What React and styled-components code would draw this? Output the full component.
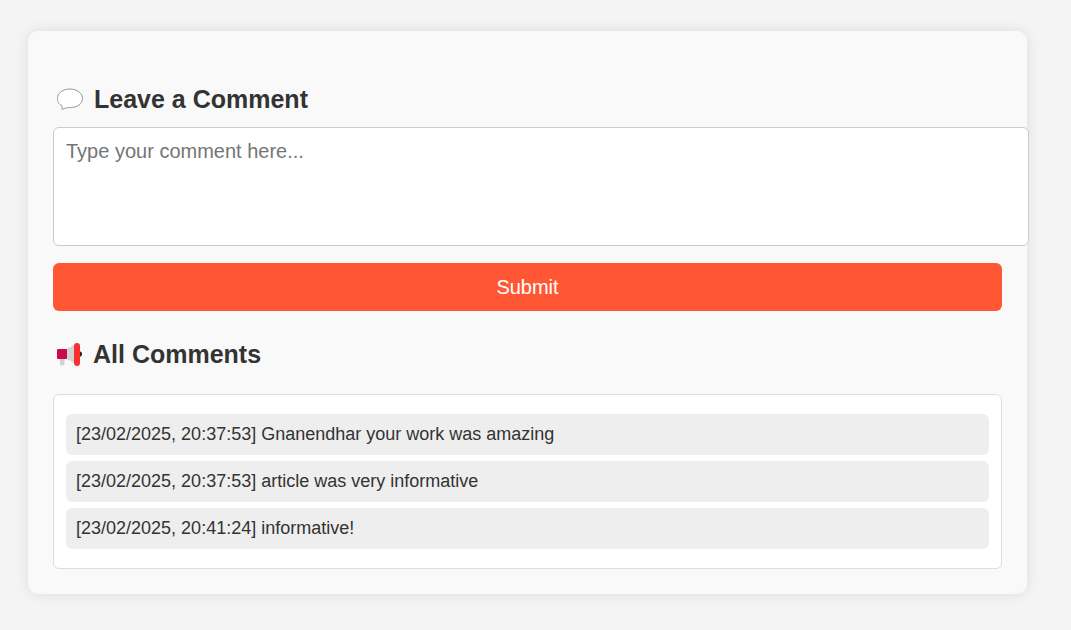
import React, { useState } from "react";
import styled, { createGlobalStyle } from "styled-components";

const GlobalStyle = createGlobalStyle`
  * { box-sizing: border-box; }
  body {
    margin: 0;
    background: #f4f4f4;
    color: #333;
    font-family: "Liberation Sans", Arial, sans-serif;
  }
`;

const Page = styled.main`
  padding: 31px 44px 36px 28px;
`;

const Card = styled.section`
  padding: 49px 25px 25px;
  background: #f9f9f9;
  border-radius: 10px;
  box-shadow: 0 0 13px rgba(0, 0, 0, 0.1);
`;

const Heading = styled.h2`
  display: flex;
  align-items: center;
  gap: ${({ $gap }) => $gap}px;
  margin: 0;
  padding-left: 3px;
  font-size: 25px;
  line-height: 38px;
`;

const Icon = styled.svg`
  flex: none;
  width: 28px;
  height: 28px;
`;

const CommentForm = styled.form`
  display: flex;
  flex-direction: column;
  align-items: flex-start;
  gap: 17px;
  margin: 9px 0 24px;
`;

const CommentInput = styled.textarea`
  display: block;
  width: calc(100% + 27px);
  height: 119px;
  padding: 11px 12px;
  border: 1px solid #ccc;
  border-radius: 6px;
  background: #fff;
  color: #333;
  font: 20px/24px "Liberation Sans", Arial, sans-serif;
  resize: none;

  &::placeholder { color: #757575; opacity: 1; }
`;

const SubmitButton = styled.button`
  width: 100%;
  height: 48px;
  padding: 0 12px;
  border: 0;
  border-radius: 6px;
  background: #ff5733;
  color: #fff;
  font: 20px/24px "Liberation Sans", Arial, sans-serif;
  cursor: pointer;
`;

const CommentList = styled.ul`
  display: flex;
  flex-direction: column;
  gap: 6px;
  margin: 21px 0 0;
  padding: 19px 12px;
  border: 1px solid #ddd;
  border-radius: 6px;
  background: #fff;
  list-style: none;
`;

const CommentItem = styled.li`
  padding: 10px;
  border-radius: 6px;
  background: #eee;
  font-size: 18px;
  line-height: 21px;
`;

const SpeechIcon = () => (
  <Icon viewBox="0 0 28 28" aria-hidden="true">
    <path
      d="M14 4C21 4 26.500 8.500 26.500 13.500C26.500 19 21 22.500 14.500 22.500C11.500 22.500 9 23 6 24.500Q5.500 24.500 6 23.500V20.500C2.500 19 1.500 16.500 1.500 13.500C1.500 8 7 4 14 4Z"
      fill="#fff"
      stroke="#999"
      strokeWidth="1"
      strokeLinejoin="round"
    />
  </Icon>
);

const MegaphoneIcon = () => (
  <Icon viewBox="0 0 28 28" aria-hidden="true">
    <path d="M4 18H8.500V24Q8.500 25.500 6.500 25.500Q4 25.500 4 24Z" fill="#d3d3d3" />
    <path d="M10 9Q15 8 18 4.500V23.500Q15 20 10 19Z" fill="#d3d3d3" />
    <rect x="1" y="9" width="10" height="10" rx="1" fill="#ca0b4a" />
    <path d="M23 11Q26 11.500 26 14Q26 16.500 23 17Z" fill="#212121" />
    <rect x="18" y="3" width="6" height="23" rx="3" fill="#f8312f" />
  </Icon>
);

const comments = [
  { time: "23/02/2025, 20:37:53", text: "Gnanendhar your work was amazing" },
  { time: "23/02/2025, 20:37:53", text: "article was very informative" },
  { time: "23/02/2025, 20:41:24", text: "informative!" },
];

export default function App() {
  const [draft, setDraft] = useState("");
  return (
    <>
      <GlobalStyle />
      <Page>
        <Card>
          <Heading id="leave-comment" $gap={10}>
            <SpeechIcon />
            Leave a Comment
          </Heading>
          <CommentForm onSubmit={(event) => event.preventDefault()}>
            <CommentInput
              aria-labelledby="leave-comment"
              placeholder="Type your comment here..."
              value={draft}
              onChange={(event) => setDraft(event.target.value)}
            />
            <SubmitButton type="submit">Submit</SubmitButton>
          </CommentForm>
          <Heading $gap={9}>
            <MegaphoneIcon />
            All Comments
          </Heading>
          <CommentList>
            {comments.map(({ time, text }, index) => (
              <CommentItem key={index}>
                [{time}] {text}
              </CommentItem>
            ))}
          </CommentList>
        </Card>
      </Page>
    </>
  );
}
